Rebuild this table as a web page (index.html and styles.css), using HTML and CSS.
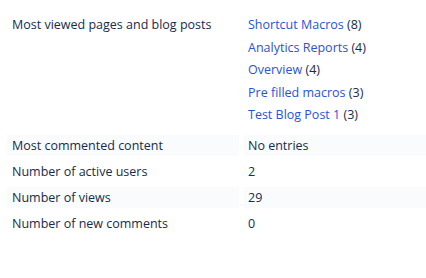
FILE: index.html
```html
<!DOCTYPE html>
<html>
<head>
<meta charset="utf-8">
<link rel="stylesheet" href="styles.css">
</head>
<body>
<div class="stats">
  <div class="cell label tall">Most viewed pages and blog posts</div>
  <div class="cell value tall">
    <div class="item"><a href="#">Shortcut Macros</a> (8)</div>
    <div class="item"><a href="#">Analytics Reports</a> (4)</div>
    <div class="item"><a href="#">Overview</a> (4)</div>
    <div class="item"><a href="#">Pre filled macros</a> (3)</div>
    <div class="item"><a href="#">Test Blog Post 1</a> (3)</div>
  </div>
  <div class="cell label shaded">Most commented content</div>
  <div class="cell value shaded">No entries</div>
  <div class="cell label">Number of active users</div>
  <div class="cell value">2</div>
  <div class="cell label shaded">Number of views</div>
  <div class="cell value shaded">29</div>
  <div class="cell label">Number of new comments</div>
  <div class="cell value">0</div>
</div>
</body>
</html>
```
FILE: styles.css
```css
html, body {
  margin: 0;
  padding: 0;
  background: #ffffff;
  overflow: hidden;
}
body {
  padding: 10px 0 0 7px;
  font-family: "Open Sans", "Noto Sans", sans-serif;
  font-size: 12.5px;
  color: #172b4d;
}
.stats {
  display: grid;
  grid-template-columns: 232px 1fr;
  column-gap: 5px;
  row-gap: 5px;
}
.cell {
  padding: 3px 5px 3px 5px;
  line-height: 15px;
}
.value {
  padding-left: 4px;
}
.tall {
  padding-top: 4px;
  padding-bottom: 3.5px;
  line-height: 22.5px;
}
.shaded {
  background: #fafbfc;
}
a {
  color: #2a52d8;
  text-decoration: none;
}
```
